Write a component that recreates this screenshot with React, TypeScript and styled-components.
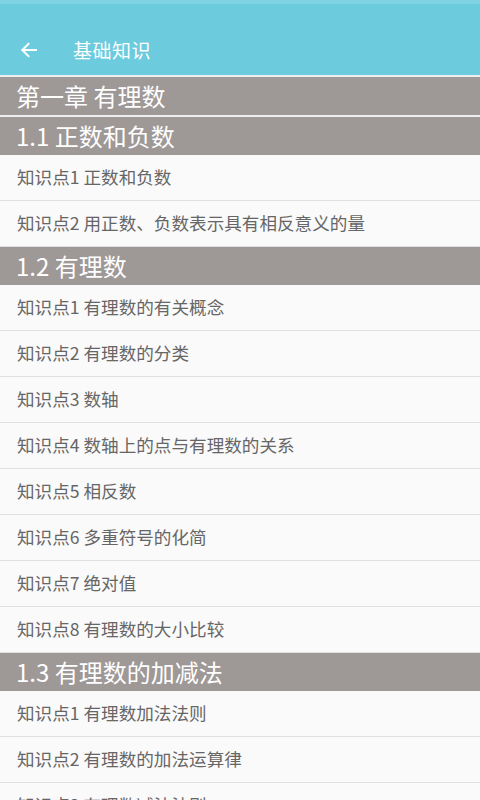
import React from "react";
import styled, { createGlobalStyle } from "styled-components";

const GlobalStyle = createGlobalStyle`
  html, body {
    margin: 0;
    padding: 0;
    background: #f1f1f1;
    font-family: "Noto Sans CJK SC", "Noto Sans", sans-serif;
  }
`;

const Page = styled.div`
  width: 480px;
  height: 800px;
  overflow: hidden;
  display: flex;
  flex-direction: column;
  background: #eeeeee;
`;

const AppBar = styled.header`
  height: 75px;
  flex-shrink: 0;
  background: #6ccbdd;
  display: flex;
  flex-direction: column;
`;

// status bar area: same colour, only a thin lighter strip on top
const StatusBar = styled.div`
  height: 24px;
  background: linear-gradient(#7fd3e2 0 4px, #6ccbdd 4px);
`;

const Toolbar = styled.div`
  flex: 1;
  display: flex;
  align-items: center;
  padding-left: 19px;
`;

const BackButton = styled.span`
  display: flex;
  width: 20px;
  height: 20px;
  margin-right: 34px;
`;

const Title = styled.h1`
  margin: 0;
  font-size: 19px;
  font-weight: 400;
  color: #ffffff;
  letter-spacing: 0.5px;
`;

const List = styled.div`
  display: flex;
  flex-direction: column;
`;

const Header = styled.div<{ $gap: number }>`
  height: 38px;
  flex-shrink: 0;
  margin-top: ${(p) => p.$gap}px;
  background: #9e9897;
  color: #ffffff;
  font-size: 24px;
  line-height: 38px;
  padding-left: 16px;
  white-space: nowrap;
`;

const Item = styled.div`
  height: 45px;
  flex-shrink: 0;
  background: #fafafa;
  border-bottom: 1px solid #e0e0e0;
  color: #666666;
  font-size: 17.6px;
  line-height: 44px;
  padding-left: 17px;
  white-space: nowrap;
`;

type Section = { title: string; items: string[] };

const sections: Section[] = [
  {
    title: "1.1 正数和负数",
    items: ["知识点1 正数和负数", "知识点2 用正数、负数表示具有相反意义的量"],
  },
  {
    title: "1.2 有理数",
    items: [
      "知识点1 有理数的有关概念",
      "知识点2 有理数的分类",
      "知识点3 数轴",
      "知识点4 数轴上的点与有理数的关系",
      "知识点5 相反数",
      "知识点6 多重符号的化简",
      "知识点7 绝对值",
      "知识点8 有理数的大小比较",
    ],
  },
  {
    title: "1.3 有理数的加减法",
    items: [
      "知识点1 有理数加法法则",
      "知识点2 有理数的加法运算律",
      "知识点3 有理数减法法则",
    ],
  },
];

const App: React.FC = () => {
  return (
    <Page>
      <GlobalStyle />
      <AppBar>
        <StatusBar />
        <Toolbar>
          <BackButton>
            <svg width="20" height="20" viewBox="0 0 20 20" fill="none">
              <path
                d="M17 10H3.5M9.5 3.8L3.3 10l6.2 6.2"
                stroke="#ffffff"
                strokeWidth="2"
                strokeLinecap="square"
              />
            </svg>
          </BackButton>
          <Title>基础知识</Title>
        </Toolbar>
      </AppBar>

      <List>
        <Header $gap={2}>第一章 有理数</Header>
        {sections.map((section, sIndex) => (
          <React.Fragment key={sIndex}>
            <Header $gap={sIndex === 0 ? 2 : 0}>{section.title}</Header>
            {section.items.map((item, iIndex) => (
              <Item key={iIndex}>{item}</Item>
            ))}
          </React.Fragment>
        ))}
      </List>
    </Page>
  );
};

export default App;
